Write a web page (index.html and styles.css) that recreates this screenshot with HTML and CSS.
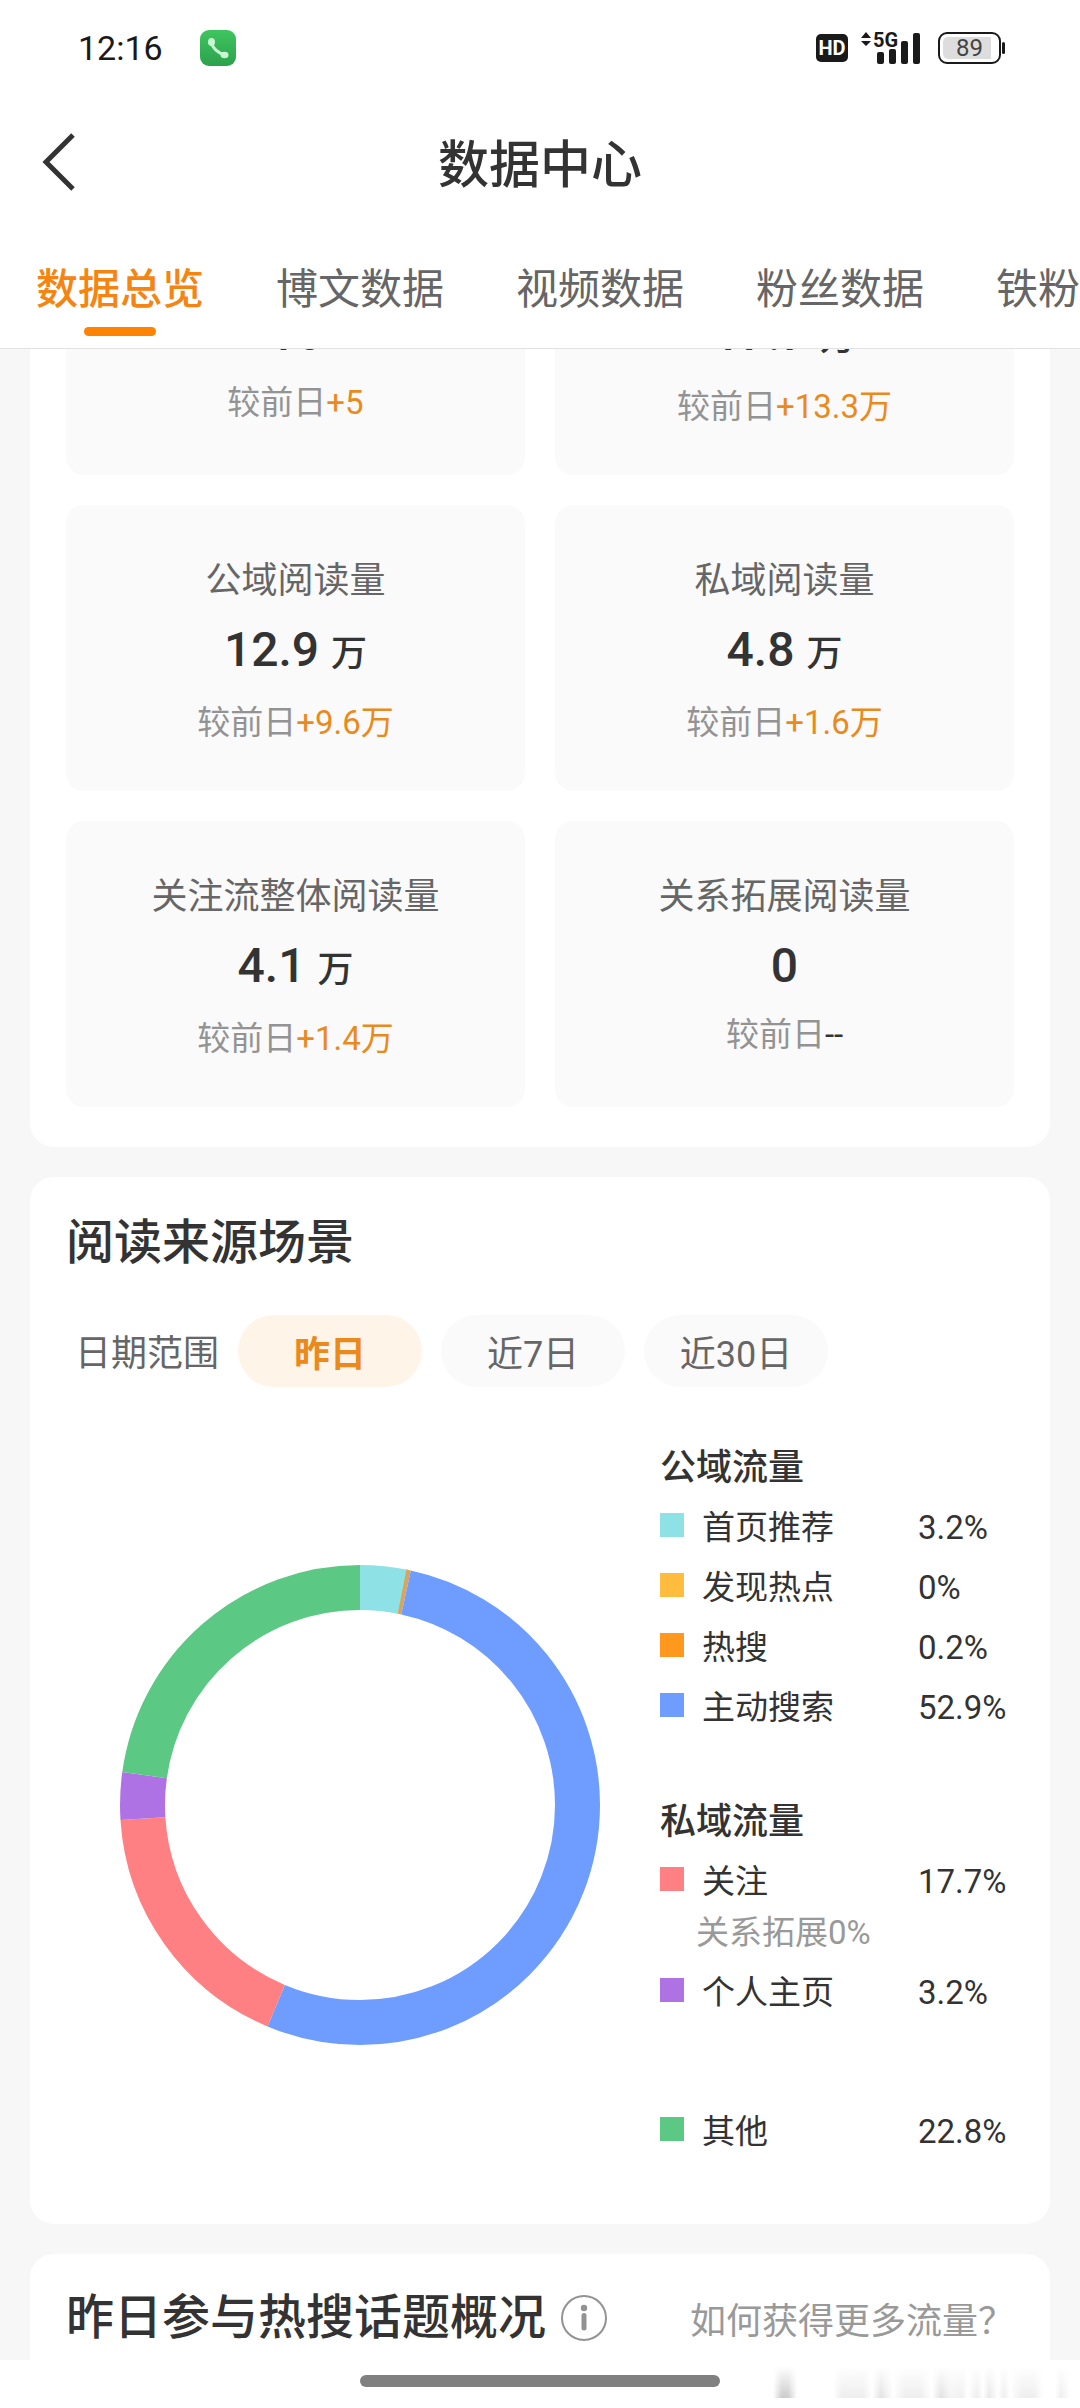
FILE: index.html
```html
<!DOCTYPE html>
<html lang="zh-CN">
<head>
<meta charset="utf-8">
<meta name="viewport" content="width=device-width, initial-scale=1">
<title>数据中心</title>
<link rel="stylesheet" href="styles.css">
</head>
<body>
<div class="app">
  <div class="statusbar">
    <span class="clock">12:16</span>
    <svg class="phone" viewBox="0 0 36 36" aria-hidden="true">
      <defs><linearGradient id="call" x1="0" y1="0" x2="0" y2="1"><stop offset="0" stop-color="#3fc55f"/><stop offset="1" stop-color="#2da14c"/></linearGradient></defs>
      <rect width="36" height="36" rx="9" fill="url(#call)"/>
      <path d="M11 12Q14 22 25 25" fill="none" stroke="#c9f7d3" stroke-width="3"/>
      <ellipse cx="11.500" cy="12" rx="3.500" ry="4" fill="#c9f7d3"/>
      <ellipse cx="24.500" cy="25" rx="4" ry="3.300" fill="#c9f7d3"/>
    </svg>
    <div class="indicators">
      <span class="hd">HD</span>
      <svg class="signal" viewBox="0 0 62 34" role="img" aria-label="5G">
        <path d="M1 7L6 1L11 7ZM1 10L6 15L11 10Z" fill="#1a1a1a"/>
        <text x="13" y="16" class="net">5G</text>
        <g fill="#1a1a1a"><rect x="17" y="21" width="7" height="12" rx="2"/><rect x="29" y="18" width="7" height="15" rx="2"/><rect x="41" y="10" width="7" height="23" rx="2"/><rect x="53" y="2" width="7" height="31" rx="2"/></g>
      </svg>
      <span class="battery"><span class="level">89</span></span>
    </div>
  </div>
  <header class="header">
    <button class="back" aria-label="返回"><svg viewBox="0 0 36 60"><path d="M33 3L6 30L33 57" fill="none" stroke="#333" stroke-width="5"/></svg></button>
    <h1 class="title">数据中心</h1>
  </header>
  <nav class="tabs">
    <a class="tab active" href="#overview">数据总览</a>
    <a class="tab" href="#posts">博文数据</a>
    <a class="tab" href="#video">视频数据</a>
    <a class="tab" href="#fans">粉丝数据</a>
    <a class="tab" href="#core">铁粉</a>
  </nav>
  <main class="content">
    <section class="card metrics">
      <div class="tile first"><span class="value">16</span><span class="delta">较前日<b class="up">+5</b></span></div>
      <div class="tile first"><span class="value">17.7 <small class="unit">万</small></span><span class="delta">较前日<b class="up">+13.3万</b></span></div>
      <div class="tile"><span class="name">公域阅读量</span><span class="value">12.9 <small class="unit">万</small></span><span class="delta">较前日<b class="up">+9.6万</b></span></div>
      <div class="tile"><span class="name">私域阅读量</span><span class="value">4.8 <small class="unit">万</small></span><span class="delta">较前日<b class="up">+1.6万</b></span></div>
      <div class="tile"><span class="name">关注流整体阅读量</span><span class="value">4.1 <small class="unit">万</small></span><span class="delta">较前日<b class="up">+1.4万</b></span></div>
      <div class="tile"><span class="name">关系拓展阅读量</span><span class="value">0</span><span class="delta">较前日<b class="none">--</b></span></div>
    </section>

    <section class="card sources">
      <h2 class="heading">阅读来源场景</h2>
      <div class="range">
        <span class="range-label">日期范围</span>
        <button class="chip selected">昨日</button>
        <button class="chip">近7日</button>
        <button class="chip">近30日</button>
      </div>
      <div class="breakdown">
        <svg class="donut" viewBox="0 0 480 480" role="img" aria-label="阅读来源占比">
          <g fill="none" stroke-width="45" transform="rotate(-90 240 240)">
            <circle cx="240" cy="240" r="217.500" pathLength="1000" stroke="#8ee2e5" stroke-dasharray="32 968"/>
            <circle cx="240" cy="240" r="217.500" pathLength="1000" stroke="#d9a45c" stroke-dasharray="3 997" stroke-dashoffset="-31"/>
            <circle cx="240" cy="240" r="217.500" pathLength="1000" stroke="#6e9dff" stroke-dasharray="529 471" stroke-dashoffset="-34"/>
            <circle cx="240" cy="240" r="217.500" pathLength="1000" stroke="#ff8082" stroke-dasharray="177 823" stroke-dashoffset="-563"/>
            <circle cx="240" cy="240" r="217.500" pathLength="1000" stroke="#ae72e4" stroke-dasharray="32 968" stroke-dashoffset="-740"/>
            <circle cx="240" cy="240" r="217.500" pathLength="1000" stroke="#5bc883" stroke-dasharray="228 772" stroke-dashoffset="-772"/>
          </g>
        </svg>
        <div class="legend">
          <div class="group">
            <h3 class="group-name">公域流量</h3>
            <div class="item"><i class="dot aqua"></i><span class="source">首页推荐</span><span>3.2%</span></div>
            <div class="item"><i class="dot yellow"></i><span class="source">发现热点</span><span>0%</span></div>
            <div class="item"><i class="dot orange"></i><span class="source">热搜</span><span>0.2%</span></div>
            <div class="item"><i class="dot blue"></i><span class="source">主动搜索</span><span>52.9%</span></div>
          </div>
          <div class="group">
            <h3 class="group-name">私域流量</h3>
            <div class="item"><i class="dot red"></i><span class="source">关注</span><span>17.7%</span></div>
            <p class="note">关系拓展0%</p>
            <div class="item"><i class="dot purple"></i><span class="source">个人主页</span><span>3.2%</span></div>
          </div>
          <div class="group other">
            <div class="item"><i class="dot green"></i><span class="source">其他</span><span>22.8%</span></div>
          </div>
        </div>
      </div>
    </section>

    <section class="card topics">
      <h2 class="heading">昨日参与热搜话题概况</h2>
      <button class="info" aria-label="说明"><svg viewBox="0 0 48 48"><circle cx="24" cy="24" r="22" fill="none" stroke="#939393" stroke-width="2"/><circle cx="24" cy="14" r="3.200" fill="#939393"/><path d="M24 21.500V34" stroke="#939393" stroke-width="5" stroke-linecap="round"/></svg></button>
      <a class="help" href="#help">如何获得更多流量？</a>
    </section>
  </main>
  <footer class="gesture"><span class="handle"></span><span class="smudge"></span></footer>
</div>
</body>
</html>
```
FILE: styles.css
```css
* { box-sizing: border-box; margin: 0; padding: 0; }

body {
  background: #fff;
  color: #333;
  font-family: Roboto, "Noto Sans CJK SC", sans-serif;
  font-size: 36px;
}

button { border: 0; background: none; font: inherit; color: inherit; }
a { color: inherit; text-decoration: none; }
h1, h2, h3 { font-weight: 500; }
svg { display: block; }

.app { display: flex; flex-direction: column; height: 100vh; overflow: hidden; }
.statusbar, .header, .tabs, .gesture { flex: none; }

.statusbar {
  display: flex;
  align-items: center;
  height: 96px;
  padding: 0 79px 0 78px;
  color: #1a1a1a;
}
.clock { width: 122px; font-size: 34px; line-height: 48px; }
.phone { width: 36px; height: 36px; }
.indicators { display: flex; align-items: center; gap: 12px; margin-left: auto; }
.hd {
  width: 32px;
  height: 28px;
  border-radius: 5px;
  background: #1a1a1a;
  color: #fff;
  font-size: 20px;
  font-weight: 700;
  line-height: 28px;
  text-align: center;
}
.signal { width: 62px; height: 34px; }
.net { font-size: 20px; font-weight: 700; fill: #1a1a1a; }
.battery {
  position: relative;
  width: 63px;
  height: 32px;
  margin-left: 4px;
  padding: 3px;
  border: 2px solid #1a1a1a;
  border-radius: 9px;
}
.battery::after {
  content: "";
  position: absolute;
  top: 8px;
  right: -6px;
  width: 3px;
  height: 12px;
  border-radius: 2px;
  background: #1a1a1a;
}
.level {
  display: block;
  height: 22px;
  border-radius: 5px;
  background: linear-gradient(90deg, #ddd 90%, #fff 90%);
  color: #444;
  font-size: 24px;
  line-height: 22px;
  text-align: center;
}

.header {
  display: grid;
  grid-template-columns: 36px 1fr 36px;
  align-items: center;
  height: 132px;
  padding: 0 40px;
}
.back svg { width: 36px; height: 60px; }
.title { padding-top: 8px; font-size: 51px; line-height: 72px; text-align: center; }

.tabs {
  display: flex;
  gap: 72px;
  height: 121px;
  padding: 30px 36px 0;
  overflow: hidden;
  border-bottom: 1px solid #e2e2e2;
}
.tab {
  display: flex;
  flex: none;
  flex-direction: column;
  align-items: center;
  gap: 5px;
  color: #666;
  font-size: 42px;
  line-height: 64px;
}
.active { color: #f58410; font-weight: 500; }
.active::after { content: ""; width: 72px; height: 9px; border-radius: 5px; background: #ff8200; }

.content {
  display: flex;
  flex: 1;
  flex-direction: column;
  gap: 30px;
  min-height: 0;
  padding: 0 30px;
  overflow: hidden;
  background: #f7f7f7;
}
.card { flex: none; border-radius: 24px; background: #fff; }

/* The list is scrolled: the first row starts above the visible area. */
.metrics {
  display: grid;
  grid-template-columns: 1fr 1fr;
  gap: 30px;
  margin-top: -60px;
  padding: 0 36px 40px;
}
.tile {
  display: flex;
  flex-direction: column;
  align-items: center;
  height: 286px;
  padding-top: 50px;
  border-radius: 18px;
  background: #fafafa;
}
.first { height: 186px; padding-top: 10px; }
.name { margin-bottom: 8px; color: #666; line-height: 52px; }
.value { font-size: 48px; font-weight: 500; line-height: 70px; }
.unit { font-size: 36px; }
.delta { margin-top: 10px; color: #939393; font-size: 33px; line-height: 48px; }
.up { color: #eb8a1c; font-weight: 400; }
.none { color: #333; font-weight: 400; }

.heading { font-size: 48px; line-height: 72px; }
.sources { padding: 30px 36px 62px; }
.range { display: flex; align-items: center; gap: 19px; margin-top: 36px; padding-left: 9px; color: #666; }
.range-label { padding-top: 6px; line-height: 66px; }
.chip { width: 184px; height: 72px; border-radius: 36px; background: #fafafa; }
.selected { background: #fff4e8; color: #eb8a1c; font-weight: 700; }

.breakdown { display: flex; align-items: flex-start; gap: 60px; margin-top: 51px; padding-left: 54px; }
.donut { width: 480px; height: 480px; margin-top: 127px; }
.legend { display: flex; flex: 1; flex-direction: column; gap: 54px; font-size: 33px; }
.group-name { font-size: 36px; line-height: 60px; }
.item { display: flex; align-items: center; line-height: 60px; }
.dot { width: 24px; height: 24px; margin: 0 18px 6px 0; }
.source { width: 216px; }
.note { margin-bottom: 9px; padding-left: 36px; color: #999; line-height: 42px; }
.other { padding-top: 25px; }
.aqua { background: #8ee2e5; }
.yellow { background: #ffbc3d; }
.orange { background: #ff981c; }
.blue { background: #6e9dff; }
.red { background: #ff8082; }
.purple { background: #ae72e4; }
.green { background: #5bc883; }

.topics { display: flex; align-items: center; height: 240px; padding: 27px 36px 140px; }
.info { margin-left: 14px; }
.info svg { width: 48px; height: 48px; }
.help { margin-left: auto; color: #999; }

.gesture { display: flex; justify-content: center; position: relative; height: 48px; padding-top: 15px; }
.handle { width: 360px; height: 12px; border-radius: 6px; background: #808080; }
.smudge {
  position: absolute;
  top: 6px;
  right: 10px;
  width: 300px;
  height: 32px;
  background:
    linear-gradient(#fff, transparent),
    linear-gradient(90deg, #fff 1%, #ccc 4%, #ccc 6%, #fff 9%, #fff 21%, #eee 24%, #eee 31%, #fff 34%, #e2e2e2 37%, #fff 41%, #eee 45%, #eee 50%, #fff 54%, #e2e2e2 57%, #f4f4f4 60%, #f0f0f0 64%, #fff 66%, #eee 69%, #fff 71%, #e8e8e8 73%, #fff 76%, #eee 78%, #fff 80%, #eee 84%, #eee 88%, #fff 91%, #fff 95%, #eee 97%, #fff);
}
```
